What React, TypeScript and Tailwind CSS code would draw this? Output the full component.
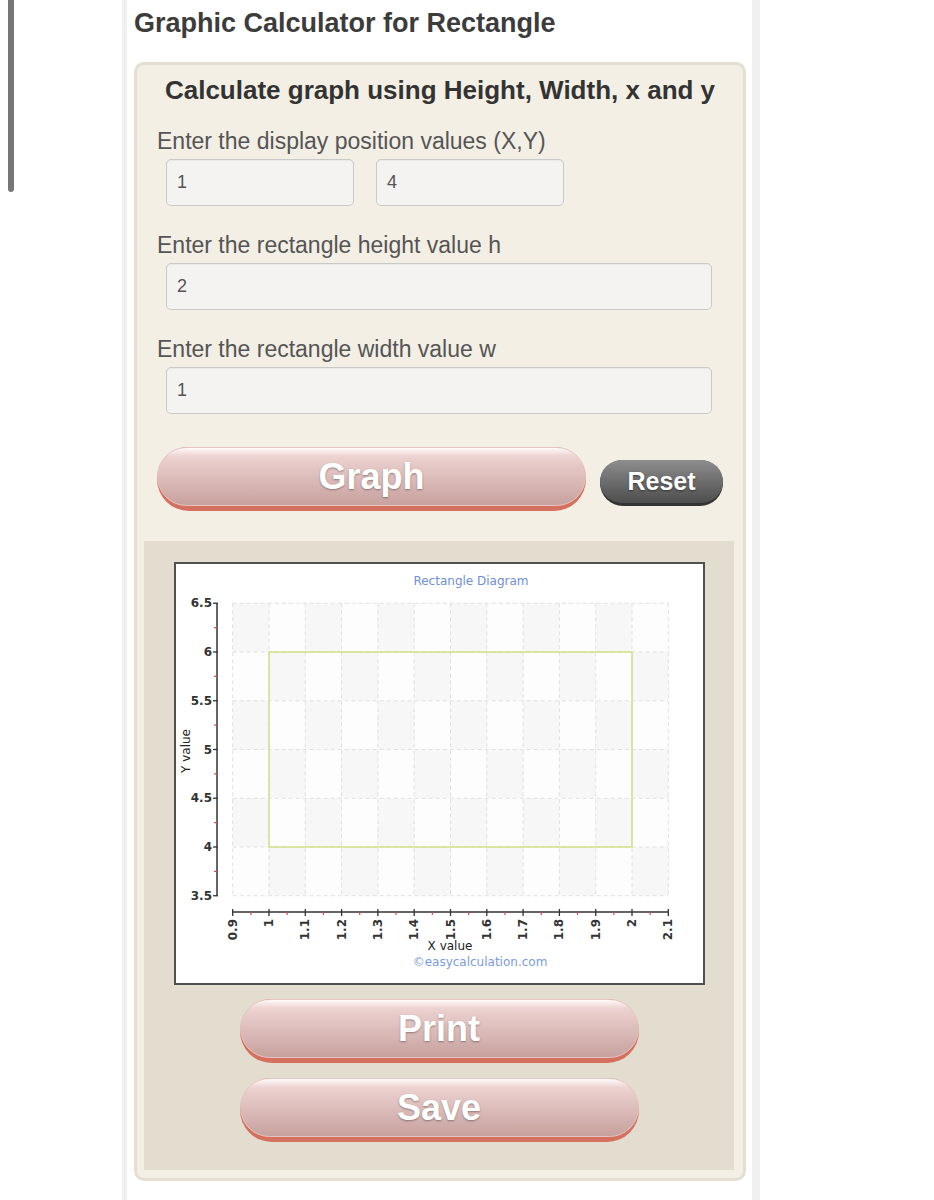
import React from "react";

// chart geometry, in page pixels minus the chart box origin
const ox = 176;
const oy = 564;
const X = (v: number) => 269 + (v - 1) * 363 - ox;
const Y = (v: number) => 652 + (6 - v) * 97.5 - oy;

const xTicks = ["0.9", "1", "1.1", "1.2", "1.3", "1.4", "1.5", "1.6", "1.7", "1.8", "1.9", "2", "2.1"];
const yTicks = ["3.5", "4", "4.5", "5", "5.5", "6", "6.5"];

const key100 = (v: number) => Math.round(v * 100);

const RectangleChart = () => {
  const left = X(0.9);
  const right = X(2.1);
  const top = Y(6.5);
  const bottom = Y(3.5);
  const axisY = 912 - oy;
  const axisX = 217 - ox;

  const cells = [];
  for (let i = 0; i < 12; i++) {
    for (let j = 0; j < 6; j++) {
      cells.push(
        <rect
          key={`c${i}-${j}`}
          x={X(0.9 + i * 0.1)}
          y={Y(6.5 - j * 0.5)}
          width={36.3}
          height={48.75}
          fill={(i + j) % 2 === 0 ? "#f7f7f7" : "#fdfdfd"}
        />
      );
    }
  }

  return (
    <svg width="527" height="419" className="block" fontFamily="'DejaVu Sans', sans-serif">
      <text x={471 - ox} y={585 - oy} fontSize="12" fill="#6f8fd8" textAnchor="middle">
        Rectangle Diagram
      </text>

      {cells}

      {xTicks.map((t) => (
        <line key={`gx${t}`} x1={X(+t)} x2={X(+t)} y1={top} y2={bottom} stroke="#e0e0e0" strokeDasharray="4 3" />
      ))}
      {yTicks.map((t) => (
        <line key={`gy${t}`} x1={left} x2={right} y1={Y(+t)} y2={Y(+t)} stroke="#e0e0e0" strokeDasharray="4 3" />
      ))}

      <rect x={X(1)} y={Y(6)} width={X(2) - X(1)} height={Y(4) - Y(6)} fill="none" stroke="#d5df88" strokeWidth="1.5" />

      {/* y axis */}
      <line x1={axisX} x2={axisX} y1={top} y2={bottom} stroke="#333" strokeWidth="1.5" />
      {yTicks.map((t) => (
        <g key={`ty${t}`}>
          <line x1={axisX - 4} x2={axisX + 1} y1={Y(+t)} y2={Y(+t)} stroke="#333" strokeWidth="1.3" />
          <text x={axisX - 5} y={Y(+t)} fontSize="12" fontWeight="bold" fill="#333" textAnchor="end" dominantBaseline="central">
            {t}
          </text>
        </g>
      ))}
      {[3.75, 4.25, 4.75, 5.25, 5.75, 6.25].map((v) => (
        <line key={`my${key100(v)}`} x1={axisX - 3} x2={axisX} y1={Y(v)} y2={Y(v)} stroke="#d84a4a" strokeWidth="1.2" />
      ))}
      <text transform={`translate(${186 - ox} ${751 - oy}) rotate(-90)`} fontSize="12" fill="#222" textAnchor="middle" dominantBaseline="central">
        Y value
      </text>

      {/* x axis */}
      <line x1={left} x2={right} y1={axisY} y2={axisY} stroke="#333" strokeWidth="1.5" />
      {xTicks.map((t) => (
        <g key={`tx${t}`}>
          <line x1={X(+t)} x2={X(+t)} y1={axisY - 3} y2={axisY + 4} stroke="#333" strokeWidth="1.3" />
          <text
            transform={`translate(${X(+t)} ${919 - oy}) rotate(-90)`}
            fontSize="12"
            fontWeight="bold"
            fill="#333"
            textAnchor="end"
            dominantBaseline="central"
          >
            {t}
          </text>
        </g>
      ))}
      {Array.from({ length: 12 }, (_, i) => 0.95 + i * 0.1).map((v) => (
        <line key={`mx${key100(v)}`} x1={X(v)} x2={X(v)} y1={axisY} y2={axisY + 3} stroke="#d84a4a" strokeWidth="1.2" />
      ))}
      <text x={450 - ox} y={950 - oy} fontSize="12" fill="#222" textAnchor="middle">
        X value
      </text>
      <text x={480 - ox} y={966 - oy} fontSize="12" fill="#7b9be0" textAnchor="middle">
        ©easycalculation.com
      </text>
    </svg>
  );
};

const PinkButton = ({ label, className }: { label: string; className: string }) => {
  return (
    <div className={`rounded-full bg-[#d6705e] pb-[5px] ${className}`}>
      <div className="flex h-full items-center justify-center rounded-full border border-[#e6c6c3] bg-linear-to-b from-[#fffafa] via-[#ecd2d0] via-15% to-[#c7a19e] text-[36px] font-bold text-white [text-shadow:0_1px_2px_rgba(0,0,0,0.35)]">
        {label}
      </div>
    </div>
  );
};

const Field = ({ value, className }: { value: string; className: string }) => {
  return (
    <input
      type="text"
      readOnly
      defaultValue={value}
      className={`h-[47px] rounded-[5px] border border-[#c9c9c9] bg-[#f4f3f1] px-[10px] text-[18px] text-[#555] shadow-[inset_0_1px_1px_rgba(0,0,0,0.04)] outline-none ${className}`}
    />
  );
};

const App = () => {
  return (
    <div className="relative min-h-[1200px] bg-white font-['Liberation_Sans',Arial,sans-serif]">
      <div className="absolute left-[8px] top-0 h-[192px] w-[6px] rounded-b-full bg-[#777]" />

      <div className="ml-[122px] min-h-[1200px] w-[638px] border-l-[5px] border-r-[8px] border-[#f0f0f0] pl-[7px] pr-[6px] pt-[7px]">
        <h1 className="h-[32px] text-[27px] font-bold leading-[32px] text-[#3c3c3c]">
          Graphic Calculator for Rectangle
        </h1>

        <div className="mt-[23px] rounded-[10px] border-[3px] border-[#e4dfd1] bg-[#f3efe5] pb-[8px] pt-[10px]">
          <h2 className="text-center text-[26px] font-bold leading-[30px] text-[#333]">
            Calculate graph using Height, Width, x and y
          </h2>

          <div className="flex flex-col pl-[20px]">
            <p className="mt-[23px] h-[27px] text-[23px] leading-[27px] text-[#555]">
              Enter the display position values (X,Y)
            </p>
            <div className="ml-[9px] mt-[4px] flex gap-[22px]">
              <Field value="1" className="w-[188px]" />
              <Field value="4" className="w-[188px]" />
            </div>

            <p className="mt-[26px] h-[27px] text-[23px] leading-[27px] text-[#555]">
              Enter the rectangle height value h
            </p>
            <Field value="2" className="ml-[9px] mt-[4px] w-[546px]" />

            <p className="mt-[26px] h-[27px] text-[23px] leading-[27px] text-[#555]">
              Enter the rectangle width value w
            </p>
            <Field value="1" className="ml-[9px] mt-[4px] w-[546px]" />

            <div className="mt-[33px] flex items-start">
              <PinkButton label="Graph" className="h-[64px] w-[429px]" />
              <div className="ml-[14px] mt-[13px] h-[46px] w-[123px] rounded-full bg-[#333] pb-[3px]">
                <div className="flex h-full items-center justify-center rounded-full bg-linear-to-b from-[#8e8e8e] to-[#4e4e4e] text-[25px] font-bold text-white [text-shadow:0_1px_2px_rgba(0,0,0,0.5)]">
                  Reset
                </div>
              </div>
            </div>
          </div>

          <div className="ml-[7px] mr-[9px] mt-[30px] flex flex-col bg-[#e3ddcf] pb-[28px] pt-[21px]">
            <div className="ml-[30px] h-[423px] w-[531px] border-2 border-[#505050] bg-white">
              <RectangleChart />
            </div>
            <PinkButton label="Print" className="mx-auto mt-[14px] h-[64px] w-[399px]" />
            <PinkButton label="Save" className="mx-auto mt-[15px] h-[64px] w-[399px]" />
          </div>
        </div>
      </div>
    </div>
  );
};

export default App;
